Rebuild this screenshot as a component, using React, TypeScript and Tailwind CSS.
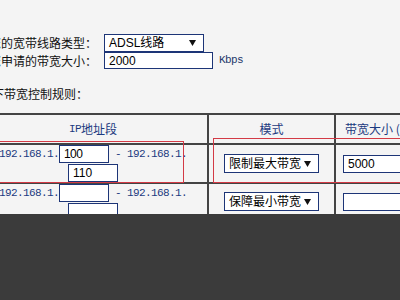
import React from "react";

const cjk = "font-['Noto_Sans_CJK_SC',sans-serif]";
const mono = "font-['Liberation_Mono','Noto_Sans_CJK_SC',monospace]";
const latin = "font-['Liberation_Sans','Noto_Sans_CJK_SC',sans-serif]";

function Arrow() {
  return (
    <svg width="7" height="6" viewBox="0 0 7 6" className="shrink-0">
      <polygon points="0,0 7,0 3.5,6" fill="#111" />
    </svg>
  );
}

function Select({ label, w, h }: { label: string; w: string; h: string }) {
  return (
    <div
      className={`${w} ${h} flex items-center justify-between bg-white border border-[#1d3577] pl-[4px] pr-[7px] text-[12px] text-black leading-none ${latin}`}
    >
      <span>{label}</span>
      <Arrow />
    </div>
  );
}

function Input({ value, w }: { value?: string; w: string }) {
  return (
    <div
      className={`${w} h-[18px] flex items-center bg-white border border-[#1d3577] pl-[4px] text-[12px] text-black leading-none ${latin}`}
    >
      {value}
    </div>
  );
}

function IpCell({ from, to }: { from?: string; to?: string }) {
  return (
    <div className="bg-[#f4f4f4] h-[37px] flex flex-col items-center">
      <div className={`flex items-center h-[18px] text-[11px] tracking-[-0.6px] text-[#1c3a80] whitespace-pre ${mono}`}>
        <span>192.168.1.</span>
        <Input value={from} w="w-[50px]" />
        <span> - 192.168.1.</span>
      </div>
      <div className="pt-[1px]">
        <Input value={to} w="w-[50px]" />
      </div>
    </div>
  );
}

export default function App() {
  return (
    <div className="w-[400px] h-[300px] flex flex-col overflow-hidden">
      <div className="h-[214px] shrink-0 bg-[#f4f4f4] relative overflow-hidden">
        {/* form fields */}
        <div className="-ml-[103px] pt-[34px]">
          <div className="flex items-center h-[18px]">
            <div className={`w-[200px] text-right text-[12px] text-[#111] ${cjk}`}>请选择您的宽带线路类型：</div>
            <div className="ml-[7px]">
              <Select label="ADSL线路" w="w-[100px]" h="h-[18px]" />
            </div>
          </div>
          <div className="flex items-center h-[17px]">
            <div className={`w-[200px] text-right text-[12px] text-[#111] ${cjk}`}>请填写您申请的带宽大小：</div>
            <div className="ml-[7px]">
              <div
                className={`w-[109px] h-[17px] flex items-center bg-white border border-[#1d3577] pl-[4px] text-[12px] text-black leading-none ${latin}`}
              >
                2000
              </div>
            </div>
            <span className={`ml-[6px] text-[11px] tracking-[-0.6px] text-[#23386b] ${mono}`}>Kbps</span>
          </div>
        </div>

        <div className={`-ml-[20px] mt-[17px] h-[16px] leading-[16px] text-[12px] text-[#111] ${cjk}`}>
          以下带宽控制规则：
        </div>

        {/* rules table */}
        <div className="-ml-[23px] mt-[11px] w-[500px] grid grid-cols-[228px_125px_1fr] gap-[2px] p-[2px] bg-[#444]">
          <div className={`bg-[#f4f4f4] h-[28px] flex items-center justify-center text-[12px] text-[#1c3a80] ${cjk}`}>
            <span className={`text-[11px] tracking-[-0.6px] ${mono}`}>IP</span>地址段
          </div>
          <div className={`bg-[#f4f4f4] h-[28px] flex items-center justify-center text-[12px] text-[#1c3a80] ${cjk}`}>
            模式
          </div>
          <div className={`bg-[#f4f4f4] h-[28px] flex items-center pl-[9px] text-[12px] text-[#1c3a80] ${cjk}`}>
            带宽大小 (Kbps)
          </div>

          <IpCell from="100" to="110" />
          <div className="bg-[#f4f4f4] flex items-center justify-center">
            <Select label="限制最大带宽" w="w-[95px]" h="h-[19px]" />
          </div>
          <div className="bg-[#f4f4f4] flex items-center pl-[7px]">
            <Input value="5000" w="w-[120px]" />
          </div>

          <IpCell />
          <div className="bg-[#f4f4f4] flex items-start justify-center pt-[8px]">
            <Select label="保障最小带宽" w="w-[95px]" h="h-[19px]" />
          </div>
          <div className="bg-[#f4f4f4] flex items-start pl-[7px] pt-[9px]">
            <Input w="w-[120px]" />
          </div>
        </div>

        {/* red highlight boxes */}
        <div className="absolute left-[-5px] top-[141px] w-[189px] h-[42px] border border-[#d33a45]" />
        <div className="absolute left-[213px] top-[138px] w-[300px] h-[45px] border border-[#d33a45]" />
      </div>
      <div className="flex-1 bg-[#3b3b3b]" />
    </div>
  );
}
